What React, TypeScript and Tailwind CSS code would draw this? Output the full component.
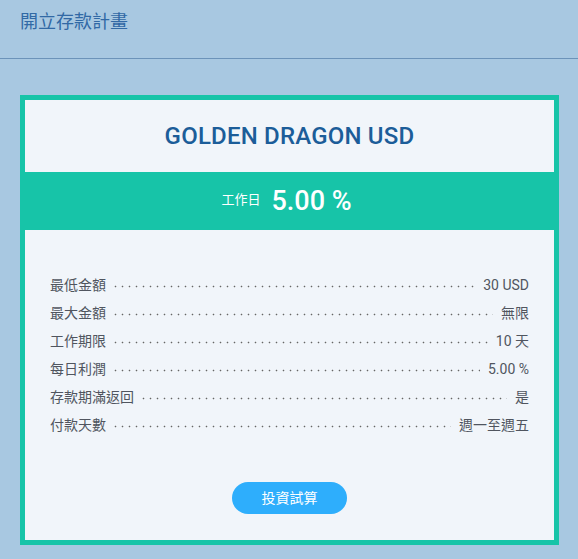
const rows = [
  { label: "最低金額", value: "30 USD" },
  { label: "最大金額", value: "無限" },
  { label: "工作期限", value: "10 天" },
  { label: "每日利潤", value: "5.00 %" },
  { label: "存款期滿返回", value: "是" },
  { label: "付款天數", value: "週一至週五" },
];

const font = "font-['Roboto','Noto_Sans_CJK_TC',sans-serif]";

export default function App() {
  return (
    <div className={`min-h-[559px] w-full bg-[#a8c8e1] ${font}`}>
      <div className="h-[59px] border-b border-[#6c93b9] px-5 pt-[10px]">
        <h1 className="text-[18px] leading-[24px] text-[#3169a5]">開立存款計畫</h1>
      </div>

      <div className="px-5 pt-[36px]">
        <div className="w-[539px] border-[5px] border-[#17c4a8] bg-[#f1f5fa]">
          <div className="flex h-[72px] items-center justify-center">
            <h2 className="text-[24px] font-medium tracking-[0.2px] text-[#1c5d99]">
              GOLDEN DRAGON USD
            </h2>
          </div>

          <div className="flex h-[58px] items-center justify-center gap-[11px] bg-[#17c4a8] pr-[6px] text-white">
            <span className="mt-[-3px] text-[13px]">工作日</span>
            <span className="text-[27px] font-medium">5.00 %</span>
          </div>

          <div className="px-[25px] pt-[41px]">
            {rows.map((row) => (
              <div key={row.label} className="flex h-[28px] items-center text-[14px] text-[#50555f]">
                <span className="shrink-0">{row.label}</span>
                <span className="mr-[8px] ml-[6px] mt-[2px] h-[3px] flex-1 bg-[radial-gradient(circle,_#666_0.7px,_transparent_1.1px)] bg-[length:7px_3px] bg-repeat-x" />
                <span className="shrink-0">{row.value}</span>
              </div>
            ))}
          </div>

          <div className="flex justify-center pt-[43px] pb-[26px]">
            <button className="h-[32px] w-[115px] rounded-full bg-[#2eaefc] text-[14px] text-white">
              投資試算
            </button>
          </div>
        </div>
      </div>
    </div>
  );
}
